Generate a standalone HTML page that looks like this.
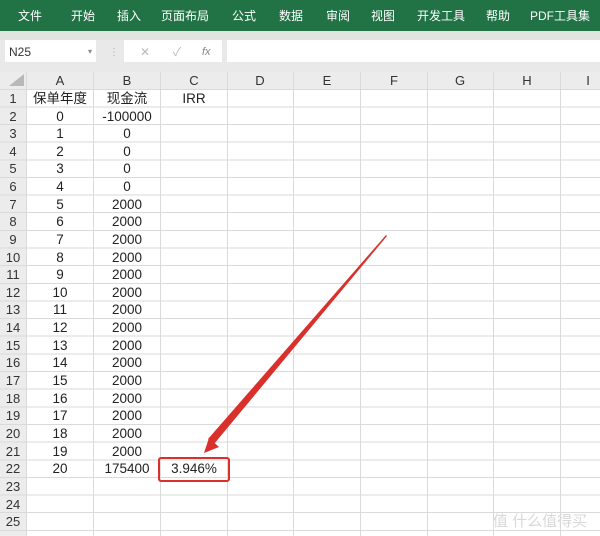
<!DOCTYPE html>
<html><head><meta charset="utf-8"><style>
html,body{margin:0;padding:0;width:600px;height:536px;overflow:hidden;background:#fff}
svg{display:block}
text{font-family:"Liberation Sans","Noto Sans CJK SC",sans-serif}
</style></head><body>
<svg width="600" height="536" viewBox="0 0 600 536" xmlns="http://www.w3.org/2000/svg">
<rect x="0" y="0" width="600" height="31" fill="#217346"/>
<g fill="#fff" font-size="12" text-anchor="middle">
<text x="30" y="20">文件</text><text x="83" y="20">开始</text><text x="129" y="20">插入</text>
<text x="185" y="20">页面布局</text><text x="244" y="20">公式</text><text x="291" y="20">数据</text>
<text x="338" y="20">审阅</text><text x="383" y="20">视图</text><text x="441" y="20">开发工具</text>
<text x="498" y="20">帮助</text><text x="560" y="20">PDF工具集</text>
</g>
<rect x="0" y="31" width="600" height="41" fill="#e9e9e9"/>
<rect x="0" y="31" width="600" height="9" fill="#e2e4e2"/>
<rect x="5" y="40" width="91" height="22" fill="#fff"/>
<text x="9" y="56" font-size="12" fill="#333">N25</text>
<text x="88" y="54" font-size="8" fill="#888">▾</text>
<text x="109" y="55" font-size="10" fill="#aaa">⋮</text>
<rect x="124" y="40" width="98" height="22" fill="#fff"/>
<text x="140" y="56" font-size="12" fill="#bbb">✕</text>
<text x="173" y="56" font-size="12" fill="#bbb">✓</text>
<text x="202" y="55" font-size="11" fill="#888" font-style="italic" font-family="Liberation Serif">fx</text>
<rect x="227" y="40" width="373" height="22" fill="#fff"/>
<rect x="0" y="72" width="600" height="17" fill="#ececec"/>
<rect x="0" y="89" width="26" height="447" fill="#ececec"/>
<polygon points="9,86 24,86 24,74" fill="#b8b8b8"/>
<g stroke="#dadada" stroke-width="1">
<line x1="26.5" y1="72" x2="26.5" y2="536"/>
<line x1="93.5" y1="72" x2="93.5" y2="536"/><line x1="160.5" y1="72" x2="160.5" y2="536"/>
<line x1="227.5" y1="72" x2="227.5" y2="536"/><line x1="293.5" y1="72" x2="293.5" y2="536"/>
<line x1="360.5" y1="72" x2="360.5" y2="536"/><line x1="427.5" y1="72" x2="427.5" y2="536"/>
<line x1="493.5" y1="72" x2="493.5" y2="536"/><line x1="560.5" y1="72" x2="560.5" y2="536"/>
<line x1="0" y1="89.5" x2="600" y2="89.5"/>
<line x1="0" y1="107" x2="600" y2="107"/><line x1="0" y1="124.5" x2="600" y2="124.5"/>
<line x1="0" y1="142" x2="600" y2="142"/><line x1="0" y1="160" x2="600" y2="160"/>
<line x1="0" y1="177.5" x2="600" y2="177.5"/><line x1="0" y1="195" x2="600" y2="195"/>
<line x1="0" y1="212.5" x2="600" y2="212.5"/><line x1="0" y1="230.5" x2="600" y2="230.5"/>
<line x1="0" y1="248" x2="600" y2="248"/><line x1="0" y1="265.5" x2="600" y2="265.5"/>
<line x1="0" y1="283.5" x2="600" y2="283.5"/><line x1="0" y1="301" x2="600" y2="301"/>
<line x1="0" y1="318.5" x2="600" y2="318.5"/><line x1="0" y1="336" x2="600" y2="336"/>
<line x1="0" y1="354" x2="600" y2="354"/><line x1="0" y1="371.5" x2="600" y2="371.5"/>
<line x1="0" y1="389" x2="600" y2="389"/><line x1="0" y1="407" x2="600" y2="407"/>
<line x1="0" y1="424.5" x2="600" y2="424.5"/><line x1="0" y1="442" x2="600" y2="442"/>
<line x1="0" y1="460" x2="600" y2="460"/><line x1="0" y1="477.5" x2="600" y2="477.5"/>
<line x1="0" y1="495" x2="600" y2="495"/><line x1="0" y1="512.5" x2="600" y2="512.5"/>
<line x1="0" y1="530.5" x2="600" y2="530.5"/>
</g>
<g font-size="13" fill="#333" text-anchor="middle">
<text x="60" y="85">A</text><text x="127" y="85">B</text><text x="194" y="85">C</text><text x="260" y="85">D</text>
<text x="327" y="85">E</text><text x="394" y="85">F</text><text x="460" y="85">G</text><text x="527" y="85">H</text><text x="588" y="85">I</text>
</g>
<g font-size="13" fill="#333" text-anchor="middle">
<text x="13" y="103">1</text><text x="13" y="121">2</text><text x="13" y="138">3</text><text x="13" y="156">4</text>
<text x="13" y="173">5</text><text x="13" y="191">6</text><text x="13" y="209">7</text><text x="13" y="226">8</text>
<text x="13" y="244">9</text><text x="13" y="262">10</text><text x="13" y="279">11</text><text x="13" y="297">12</text>
<text x="13" y="314">13</text><text x="13" y="332">14</text><text x="13" y="350">15</text><text x="13" y="367">16</text>
<text x="13" y="385">17</text><text x="13" y="403">18</text><text x="13" y="420">19</text><text x="13" y="438">20</text>
<text x="13" y="456">21</text><text x="13" y="473">22</text><text x="13" y="491">23</text><text x="13" y="509">24</text>
<text x="13" y="526">25</text>
</g>
<g font-size="13.5" fill="#222" text-anchor="middle">
<text x="60" y="103">保单年度</text><text x="127" y="103">现金流</text><text x="194" y="103">IRR</text>
<text x="60" y="121">0</text><text x="127" y="121">-100000</text>
<text x="60" y="138">1</text><text x="127" y="138">0</text>
<text x="60" y="156">2</text><text x="127" y="156">0</text>
<text x="60" y="173">3</text><text x="127" y="173">0</text>
<text x="60" y="191">4</text><text x="127" y="191">0</text>
<text x="60" y="209">5</text><text x="127" y="209">2000</text>
<text x="60" y="226">6</text><text x="127" y="226">2000</text>
<text x="60" y="244">7</text><text x="127" y="244">2000</text>
<text x="60" y="262">8</text><text x="127" y="262">2000</text>
<text x="60" y="279">9</text><text x="127" y="279">2000</text>
<text x="60" y="297">10</text><text x="127" y="297">2000</text>
<text x="60" y="314">11</text><text x="127" y="314">2000</text>
<text x="60" y="332">12</text><text x="127" y="332">2000</text>
<text x="60" y="350">13</text><text x="127" y="350">2000</text>
<text x="60" y="367">14</text><text x="127" y="367">2000</text>
<text x="60" y="385">15</text><text x="127" y="385">2000</text>
<text x="60" y="403">16</text><text x="127" y="403">2000</text>
<text x="60" y="420">17</text><text x="127" y="420">2000</text>
<text x="60" y="438">18</text><text x="127" y="438">2000</text>
<text x="60" y="456">19</text><text x="127" y="456">2000</text>
<text x="60" y="473">20</text><text x="127" y="473">175400</text>
<text x="194" y="473">3.946%</text>
</g>
<rect x="159" y="458" width="70" height="23" rx="2" fill="none" stroke="#d9302c" stroke-width="2"/>
<polygon points="386,235 387,236 214,444 208,439" fill="#d9302c"/>
<polygon points="204,453 219,447 209,438" fill="#d9302c"/>
<text x="540" y="526" font-size="15" fill="#d8d8d8" text-anchor="middle">值 什么值得买</text>
</svg>
</body></html>
